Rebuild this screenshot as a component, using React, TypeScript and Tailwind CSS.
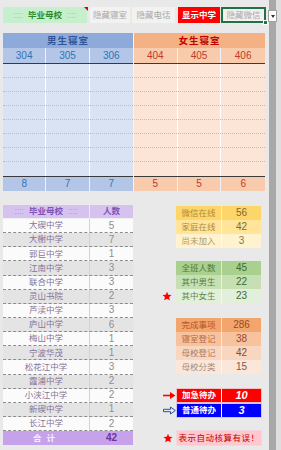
import React from "react";

const schools: [string, number][] = [
  ["大碶中学", 5],
  ["大榭中学", 7],
  ["郭巨中学", 1],
  ["江南中学", 3],
  ["联合中学", 3],
  ["灵山书院", 2],
  ["芦渎中学", 3],
  ["庐山中学", 6],
  ["梅山中学", 1],
  ["宁波华茂", 1],
  ["松花江中学", 3],
  ["霞浦中学", 2],
  ["小浃江中学", 2],
  ["新碶中学", 1],
  ["长江中学", 2],
];

function Star() {
  return (
    <svg width="10" height="10" viewBox="0 0 24 24">
      <path
        d="M12 1.5l3.1 7.2 7.8.7-5.9 5.2 1.8 7.7L12 18.3 5.2 22.3 7 14.6 1.1 9.4l7.8-.7z"
        fill="#ff0000"
      />
    </svg>
  );
}

function RedArrow() {
  return (
    <svg width="13" height="9" viewBox="0 0 13 9">
      <line x1="0" y1="4.5" x2="9" y2="4.5" stroke="#ff0000" strokeWidth="1.6" />
      <polygon points="7,1 12.5,4.5 7,8" fill="#ff0000" />
    </svg>
  );
}

function BlueArrow() {
  return (
    <svg width="13" height="9" viewBox="0 0 13 9">
      <path
        d="M0.5 3.3 H7.5 V1 L12.3 4.5 L7.5 8 V5.7 H0.5 Z"
        fill="none"
        stroke="#2f4f9f"
        strokeWidth="1"
      />
    </svg>
  );
}

type DormTheme = {
  headBg: string;
  headText: string;
  rowBg: string;
  rowText: string;
  bodyBg: string;
};

function DormHalf({
  title,
  rooms,
  counts,
  left,
}: {
  title: string;
  rooms: string[];
  counts: string[];
  left: boolean;
}) {
  const cols = [0, 1, 2];
  return (
    <div className={left ? "w-[130px] flex flex-col" : "w-[131px] flex flex-col"}>
      <div
        className={
          left
            ? "h-[15px] bg-[#8eaadb] text-[#2f5597] font-bold text-[9.5px] flex items-center justify-center tracking-[1px]"
            : "h-[15px] bg-[#f4b183] text-[#c00000] font-bold text-[9.5px] flex items-center justify-center tracking-[1px]"
        }
      >
        {title}
      </div>
      <div
        className={
          left
            ? "h-[16px] bg-[#b4c6e7] text-[#2e75b6] border-b border-[#3a3a3a] grid grid-cols-3 text-[10px]"
            : "h-[16px] bg-[#f8cbad] text-[#c0392b] border-b border-[#3a3a3a] grid grid-cols-3 text-[10px]"
        }
      >
        {rooms.map((r, i) => (
          <div
            key={r}
            className={
              i < 2
                ? "flex items-center justify-center border-r border-[#eef2fa]"
                : "flex items-center justify-center"
            }
          >
            {r}
          </div>
        ))}
      </div>
      <div className={left ? "bg-[#dae3f3] flex flex-col" : "bg-[#fce4d6] flex flex-col"}>
        {[0, 1, 2, 3, 4, 5, 6, 7].map((r) => (
          <div
            key={r}
            className={
              r < 7
                ? "h-[14px] grid grid-cols-3 border-b border-dotted border-[#bdbdbd]"
                : "h-[14px] grid grid-cols-3"
            }
          >
            {cols.map((c) => (
              <div key={c} className={c < 2 ? "border-r border-white" : ""} />
            ))}
          </div>
        ))}
      </div>
      <div
        className={
          left
            ? "h-[15px] bg-[#b4c6e7] text-[#2e75b6] border-t border-[#3a3a3a] grid grid-cols-3 text-[10px]"
            : "h-[15px] bg-[#f8cbad] text-[#c0392b] border-t border-[#3a3a3a] grid grid-cols-3 text-[10px]"
        }
      >
        {counts.map((r, i) => (
          <div
            key={i}
            className={
              i < 2
                ? "flex items-center justify-center border-r border-[#eef2fa]"
                : "flex items-center justify-center"
            }
          >
            {r}
          </div>
        ))}
      </div>
    </div>
  );
}

function StatRow({
  label,
  value,
  bg,
  text,
  valText,
  marker,
}: {
  label: string;
  value: string;
  bg: string;
  text: string;
  valText: string;
  marker?: React.ReactNode;
}) {
  return (
    <div className="flex h-[14px]">
      <div className="w-[18px] pl-[4px] flex items-center">{marker}</div>
      <div className={"w-[46px] flex items-center justify-center border-r border-[#ffffff99] " + bg + " " + text}>
        {label}
      </div>
      <div className={"w-[39px] flex items-center justify-center text-[10px] " + bg + " " + valText}>
        {value}
      </div>
    </div>
  );
}

export default function App() {
  return (
    <div className="relative w-[281px] h-[450px] bg-[#e9e9e9] flex overflow-hidden font-['Liberation_Sans','Noto_Sans_CJK_SC',sans-serif] text-[8.5px] leading-none">
      <div className="w-[269px] flex flex-col">
        {/* top bar */}
        <div className="flex h-[16px] mt-[7px] pl-[3px]">
          <div className="relative w-[84px] bg-[#c6efce] flex items-center justify-center gap-[5px]">
            <span className="text-[#8fd18f]">::::</span>
            <span className="font-bold text-[#2e8b2e]">毕业母校</span>
            <span className="text-[#8fd18f]">::::</span>
            <div className="absolute right-[-1px] top-0 w-0 h-0 border-l-[4px] border-l-transparent border-t-[4px] border-t-[#e00000]" />
          </div>
          <div className="ml-[3px] w-[40px] bg-[#f2f2f2] text-[#a8a8a8] flex items-center justify-center">
            隐藏寝室
          </div>
          <div className="ml-[2px] w-[43px] bg-[#f2f2f2] text-[#a8a8a8] flex items-center justify-center">
            隐藏电话
          </div>
          <div className="ml-[3px] w-[42px] bg-[#ff0000] text-white font-bold flex items-center justify-center">
            显示中学
          </div>
          <div className="relative ml-[1px] w-[45px] bg-[#f2f2f2] text-[#a8a8a8] border-2 border-[#217346] flex items-center justify-center">
            隐藏微信
            <div className="absolute right-[-4px] bottom-[-4px] w-[5px] h-[5px] bg-[#217346] border border-white" />
          </div>
        </div>

        {/* dorm table */}
        <div className="mt-[10px] ml-[3px] flex gap-px bg-[#f4f4f4] w-[262px]">
          <DormHalf title="男生寝室" rooms={["304", "305", "306"]} counts={["8", "7", "7"]} left />
          <DormHalf title="女生寝室" rooms={["404", "405", "406"]} counts={["5", "5", "6"]} left={false} />
        </div>

        {/* bottom section */}
        <div className="mt-[14px] flex">
          {/* school table */}
          <div className="ml-[3px] w-[130px] flex flex-col">
            <div className="h-[14px] bg-[#d6c2ef] border-b border-[#f0f0f0] flex">
              <div className="w-[87px] flex items-center justify-center gap-[5px] border-r border-[#efe6fa]">
                <span className="text-[#b596dc]">::::</span>
                <span className="font-bold text-[#7d52b5]">毕业母校</span>
                <span className="text-[#b596dc]">::::</span>
              </div>
              <div className="flex-1 flex items-center justify-center text-[#7d52b5] font-bold">人数</div>
            </div>
            <div className="h-[212px] flex flex-col">
              {schools.map(([name, n], i) => (
                <div
                  key={name}
                  className={
                    "flex-1 flex border-b border-dashed border-[#8c8c8c] text-[#85739a] " +
                    (i % 2 === 0 ? "bg-[#fbfbfb]" : "bg-[#e4e4e4]")
                  }
                >
                  <div className="w-[87px] flex items-center justify-center border-r border-[#d2d2d2]">{name}</div>
                  <div className="flex-1 flex items-center justify-center text-[10px] text-[#8f8f8f]">{n}</div>
                </div>
              ))}
            </div>
            <div className="h-[14px] bg-[#c6a2ea] flex font-bold">
              <div className="w-[87px] flex items-center justify-center text-[#f6effd] tracking-[5px]">合计</div>
              <div className="flex-1 flex items-center justify-center text-[10px] text-[#7030a0]">42</div>
            </div>
          </div>

          {/* right stats */}
          <div className="ml-[25px] w-[104px] flex flex-col">
            <div className="mt-[1px] flex flex-col">
              <StatRow label="微信在线" value="56" bg="bg-[#fdd66a]" text="text-[#b08a3c]" valText="text-[#856a2c]" />
              <StatRow label="家庭在线" value="42" bg="bg-[#ffe49a]" text="text-[#b08a3c]" valText="text-[#856a2c]" />
              <StatRow label="尚未加入" value="3" bg="bg-[#fff2cf]" text="text-[#b59a5c]" valText="text-[#8a7640]" />
            </div>
            <div className="mt-[13px] flex flex-col">
              <StatRow label="全班人数" value="45" bg="bg-[#a9d08e]" text="text-[#4d7a38]" valText="text-[#3e6a2c]" />
              <StatRow label="其中男生" value="22" bg="bg-[#c6e0b4]" text="text-[#557f40]" valText="text-[#3e6a2c]" />
              <StatRow label="其中女生" value="23" bg="bg-[#e2efda]" text="text-[#5f8a4a]" valText="text-[#3e6a2c]" marker={<Star />} />
            </div>
            <div className="mt-[15px] flex flex-col">
              <StatRow label="完成事项" value="286" bg="bg-[#f2a56c]" text="text-[#b4552a]" valText="text-[#9b4a22]" />
              <StatRow label="寝室登记" value="38" bg="bg-[#f7c39e]" text="text-[#b86a44]" valText="text-[#9b4a22]" />
              <StatRow label="母校登记" value="42" bg="bg-[#f9d6bf]" text="text-[#b07a5e]" valText="text-[#8a4a2a]" />
              <StatRow label="母校分类" value="15" bg="bg-[#fbe7da]" text="text-[#a88a78]" valText="text-[#7a5a48]" />
            </div>
            <div className="mt-[14px] flex flex-col">
              <div className="flex h-[15px]">
                <div className="w-[18px] pl-[5px] flex items-center"><RedArrow /></div>
                <div className="w-[86px] flex border border-[#f3c0c0]">
                  <div className="w-[45px] bg-[#ff0000] text-white font-bold flex items-center justify-center border-r border-white">加急待办</div>
                  <div className="flex-1 bg-[#ff0000] text-white font-bold italic text-[11px] flex items-center justify-center">10</div>
                </div>
              </div>
              <div className="flex h-[15px]">
                <div className="w-[18px] pl-[5px] flex items-center"><BlueArrow /></div>
                <div className="w-[86px] flex border border-[#c8c8f0]">
                  <div className="w-[45px] bg-[#0000ff] text-white font-bold flex items-center justify-center border-r border-white">普通待办</div>
                  <div className="flex-1 bg-[#0000ff] text-white font-bold italic text-[11px] flex items-center justify-center">3</div>
                </div>
              </div>
            </div>
            <div className="mt-[12px] flex h-[16px]">
              <div className="w-[18px] pl-[5px] flex items-center"><Star /></div>
              <div className="w-[86px] bg-[#ffc7ce] border border-[#f0d8dc] text-[#c00000] flex items-center justify-center tracking-[0.5px]">
                表示自动核算有误！
              </div>
            </div>
          </div>
        </div>
      </div>
      <div className="w-[7px] bg-[#a8a8a8]" />
      <div className="flex-1 bg-[#dedede]" />
      {/* dropdown button */}
      <div className="absolute left-[268px] top-[10px] w-[9px] h-[12px] bg-white border border-[#a0a0a0] flex items-center justify-center">
        <div className="w-0 h-0 border-l-[2.5px] border-r-[2.5px] border-t-[3px] border-l-transparent border-r-transparent border-t-[#333]" />
      </div>
    </div>
  );
}
